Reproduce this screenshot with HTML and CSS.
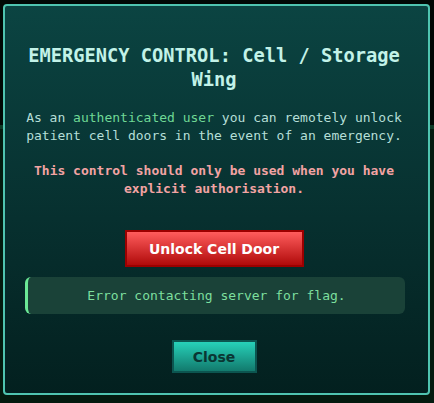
FILE: index.html
```html
<!DOCTYPE html>
<html>
<head>
<meta charset="utf-8">
<link rel="stylesheet" href="styles.css">
</head>
<body>
<div class="backdrop">
  <div class="modal">
    <h3 class="title">EMERGENCY CONTROL: Cell / Storage Wing</h3>
    <p class="info">As an <span class="hl">authenticated user</span> you can remotely unlock patient cell doors in the event of an emergency.</p>
    <p class="warn">This control should only be used when you have explicit authorisation.</p>
    <button class="btn-unlock">Unlock Cell Door</button>
    <div class="msg">Error contacting server for flag.</div>
    <button class="btn-close">Close</button>
  </div>
</div>
</body>
</html>
```
FILE: styles.css
```css
html, body {
  margin: 0;
  padding: 0;
}
body {
  width: 434px;
  height: 403px;
  overflow: hidden;
  background:
    linear-gradient(to bottom, #010805 0, #010805 125px, #0d3a26 125px, #0d3a26 129px, #041a0f 129px);
  font-family: "DejaVu Sans Mono", monospace;
}
.backdrop {
  padding: 4px 4px 8px 3px;
  display: flex;
}
.modal {
  width: 427px;
  height: 391px;
  box-sizing: border-box;
  border: 2px solid #4fc4b0;
  border-radius: 4px;
  background: linear-gradient(to bottom, #0b4442 0%, #07302f 55%, #03201f 100%);
  padding: 20px 25px 20px 20px;
  display: flex;
  flex-direction: column;
  align-items: center;
  text-align: center;
}
.title {
  margin: 18px 0 0 0;
  font-size: 18.72px;
  line-height: 23.5px;
  font-weight: bold;
  color: #c2f2e8;
}
.info {
  margin: 18px 0 0 0;
  font-size: 13px;
  line-height: 18px;
  color: #b5dfd7;
}
.hl {
  color: #6fd895;
}
.warn {
  margin: 17px 0 0 0;
  font-size: 13px;
  line-height: 18px;
  font-weight: bold;
  color: #f2a3a3;
}
.btn-unlock {
  margin-top: 32px;
  width: 179px;
  height: 37px;
  border: 2px solid #9c0000;
  background: linear-gradient(to bottom, #ff5d5d, #b00a0a);
  color: #ffffff;
  font-family: "DejaVu Sans", sans-serif;
  font-weight: bold;
  font-size: 14px;
  padding: 0;
}
.msg {
  margin-top: 10px;
  align-self: stretch;
  margin-right: -2px;
  height: 37px;
  box-sizing: border-box;
  display: flex;
  align-items: center;
  justify-content: center;
  background: #1a4238;
  border-left: 3px solid #6be896;
  border-radius: 6px;
  color: #7ddf9e;
  font-size: 13px;
}
.btn-close {
  margin-top: 26px;
  width: 85px;
  height: 33px;
  border: 2px solid #0c5550;
  background: linear-gradient(to bottom, #27d1b9, #127a6d);
  color: #0a3633;
  font-family: "DejaVu Sans", sans-serif;
  font-weight: bold;
  font-size: 14px;
  padding: 0;
}
```
